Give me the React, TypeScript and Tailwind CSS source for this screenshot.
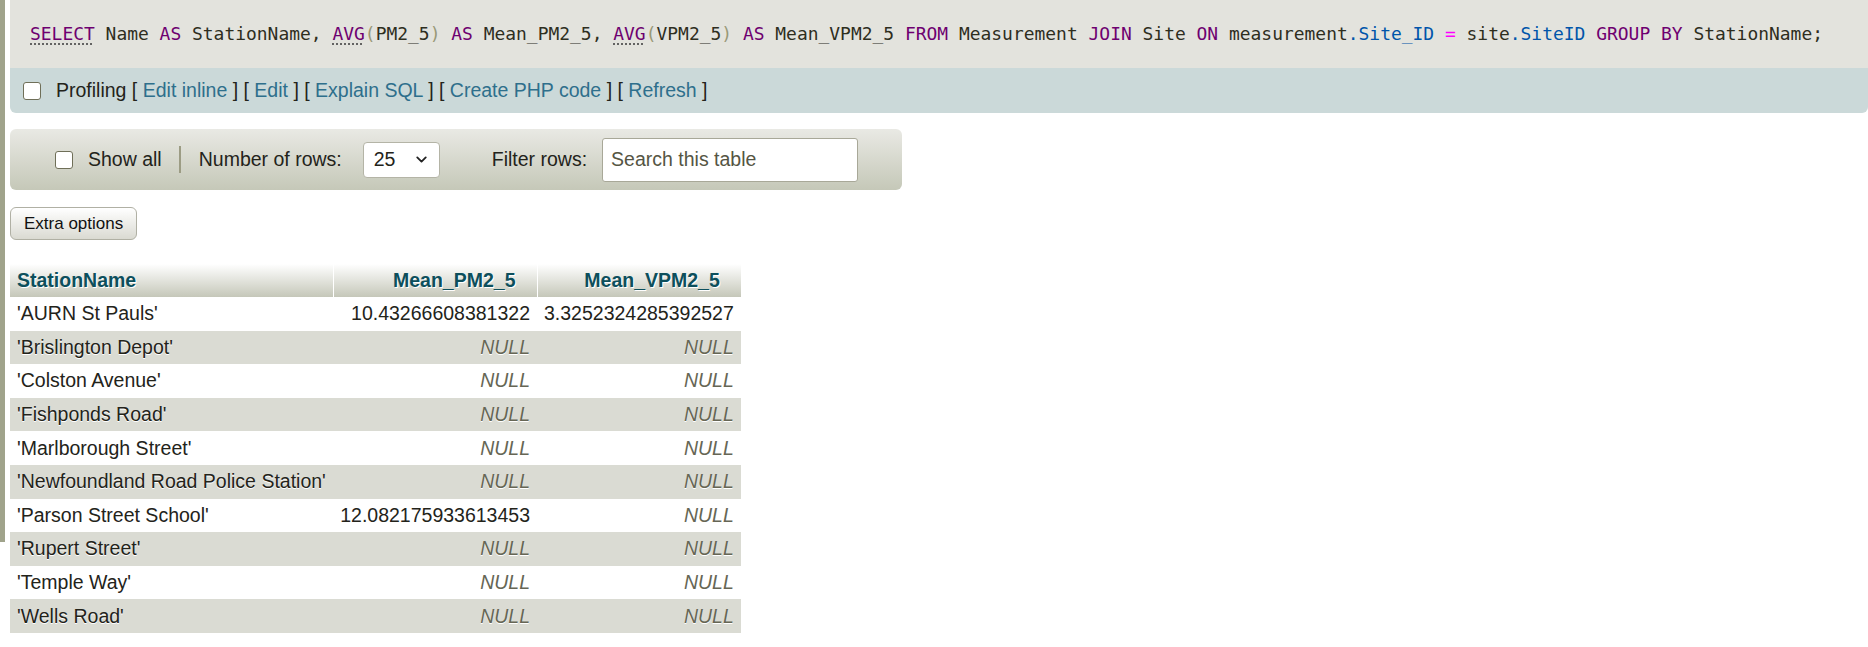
import { ChevronDown } from "lucide-react";

const rows: [string, string | null, string | null][] = [
  ["'AURN St Pauls'", "10.43266608381322", "3.3252324285392527"],
  ["'Brislington Depot'", null, null],
  ["'Colston Avenue'", null, null],
  ["'Fishponds Road'", null, null],
  ["'Marlborough Street'", null, null],
  ["'Newfoundland Road Police Station'", null, null],
  ["'Parson Street School'", "12.082175933613453", null],
  ["'Rupert Street'", null, null],
  ["'Temple Way'", null, null],
  ["'Wells Road'", null, null],
];

function Kw({ children }: { children: React.ReactNode }) {
  return <span className="text-[#6e0070]">{children}</span>;
}

function Fn({ children }: { children: React.ReactNode }) {
  return <span className="text-[#6e0070] underline decoration-dotted decoration-[#555] underline-offset-[4px]">{children}</span>;
}

function Br({ children }: { children: React.ReactNode }) {
  return <span className="text-[#999977]">{children}</span>;
}

function Bl({ children }: { children: React.ReactNode }) {
  return <span className="text-[#0055aa]">{children}</span>;
}

function Box() {
  return <input type="checkbox" className="appearance-none w-[18px] h-[18px] shrink-0 border-[1.5px] border-[#6f6f58] rounded-[3px] bg-white m-0" />;
}

function Cell({ value }: { value: string | null }) {
  if (value === null)
    return <td className="px-[7px] text-right italic text-[#666655] whitespace-nowrap">NULL</td>;
  return <td className="px-[7px] text-right whitespace-nowrap">{value}</td>;
}

export default function App() {
  return (
    <div className="flex min-h-[647px] bg-white font-['Liberation_Sans',Arial,sans-serif] text-[19.5px] text-[#23231a]">
      {/* left resizer strip */}
      <div className="w-[5px] h-[542px] shrink-0 bg-[#a0a38b]" />

      <div className="flex-1 pl-[5px]">
        {/* SQL query box */}
        <div className="rounded-b-[6px] overflow-hidden">
          <div className="h-[68px] bg-[#e3e3dd] pl-[20px] flex items-center font-['DejaVu_Sans_Mono',monospace] text-[17.95px] text-[#2e2e1e] whitespace-pre">
            <span>
              <Fn>SELECT</Fn> Name <Kw>AS</Kw> StationName, <Fn>AVG</Fn><Br>(</Br>PM2_5<Br>)</Br> <Kw>AS</Kw> Mean_PM2_5, <Fn>AVG</Fn>
              <Br>(</Br>VPM2_5<Br>)</Br> <Kw>AS</Kw> Mean_VPM2_5 <Kw>FROM</Kw> Measurement <Kw>JOIN</Kw> Site <Kw>ON</Kw> measurement
              <Bl>.Site_ID</Bl> <span className="text-[#ff00ff]">=</span> site<Bl>.SiteID</Bl> <Kw>GROUP</Kw> <Kw>BY</Kw> StationName;
            </span>
          </div>
          <div className="h-[45px] bg-[#cbd9d9] pl-[13px] flex items-center gap-[15px]">
            <Box />
            <span className="whitespace-pre">
              Profiling [ <a className="text-[#2e6f8c]">Edit inline</a> ] [ <a className="text-[#2e6f8c]">Edit</a> ] [{" "}
              <a className="text-[#2e6f8c]">Explain SQL</a> ] [ <a className="text-[#2e6f8c]">Create PHP code</a> ] [{" "}
              <a className="text-[#2e6f8c]">Refresh</a> ]
            </span>
          </div>
        </div>

        {/* navigation bar */}
        <div className="mt-[16px] w-[892px] h-[61px] rounded-[6px] bg-[linear-gradient(#e9e9e4,#c5c8b8)] flex items-center pl-[45px]">
          <Box />
          <span className="ml-[15px]">Show all</span>
          <div className="ml-[17px] mr-[18px] w-[2px] h-[27px] bg-[#9c9c84]" />
          <span>Number of rows:</span>
          <div className="ml-[21px] w-[77px] h-[36px] bg-white border border-[#b4b4a6] rounded-[4px] flex items-center justify-between pl-[10px] pr-[9px]">
            <span>25</span>
            <ChevronDown size={17} strokeWidth={2.6} color="#222" />
          </div>
          <span className="ml-[52px]">Filter rows:</span>
          <input
            placeholder="Search this table"
            className="ml-[15px] w-[256px] h-[44px] bg-white border border-[#a8a898] rounded-[3px] px-[8px] outline-none placeholder:text-[#555544] text-[19.5px]"
          />
        </div>

        {/* extra options */}
        <button className="mt-[17px] h-[33px] px-[13px] rounded-[6px] border border-[#b0b0a4] bg-[linear-gradient(#ffffff,#dadad2)] text-[17px] text-[#111]">
          Extra options
        </button>

        {/* results table */}
        <table className="mt-[24px] table-fixed border-collapse">
          <colgroup>
            <col className="w-[323px]" />
            <col className="w-[204px]" />
            <col className="w-[203px]" />
          </colgroup>
          <thead>
            <tr className="h-[33px] bg-[linear-gradient(#ffffff,#c5c7b9)] text-[#0d4f5c] font-bold [text-shadow:1px_1px_0_#fff]">
              <th className="px-[7px] text-left border-r border-white">StationName</th>
              <th className="pl-[7px] pr-[21px] text-right border-r border-white">Mean_PM2_5</th>
              <th className="pl-[7px] pr-[21px] text-right">Mean_VPM2_5</th>
            </tr>
          </thead>
          <tbody>
            {rows.map((r, i) => (
              <tr key={r[0]} className={`h-[33.6px] [text-shadow:0_1px_0_#fff] ${i % 2 === 1 ? "bg-[#dadbd3]" : "bg-white"}`}>
                <td className="px-[7px] whitespace-nowrap">{r[0]}</td>
                <Cell value={r[1]} />
                <Cell value={r[2]} />
              </tr>
            ))}
          </tbody>
        </table>
      </div>
    </div>
  );
}
